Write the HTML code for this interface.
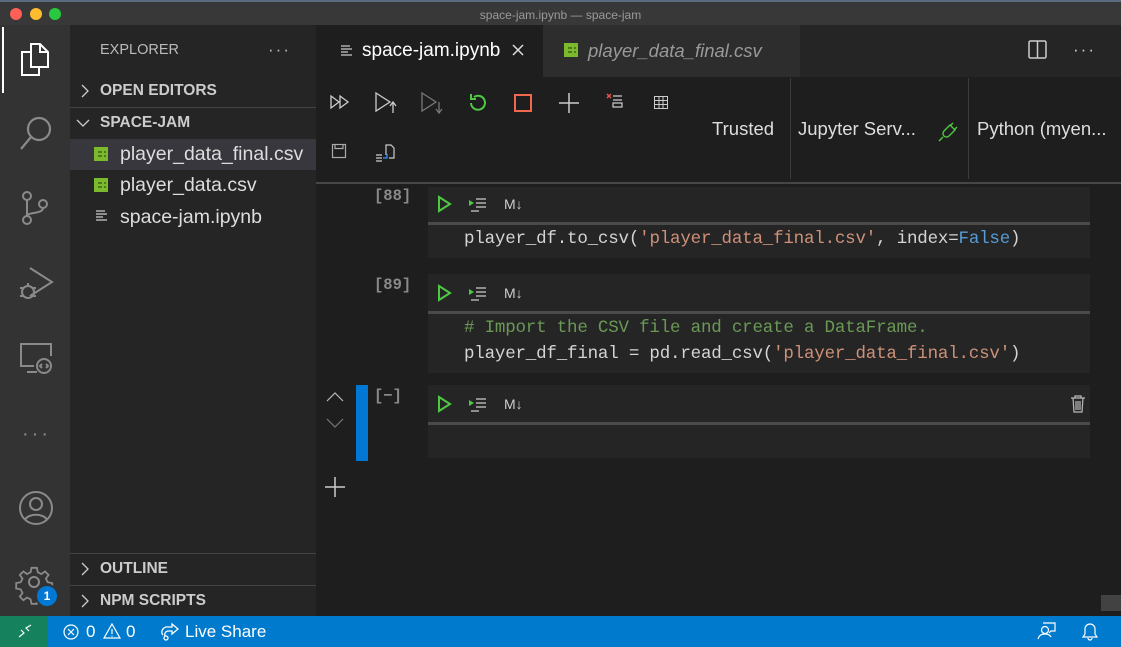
<!DOCTYPE html>
<html><head><meta charset="utf-8"><style>
*{margin:0;padding:0;box-sizing:border-box}
body{width:1121px;height:647px;overflow:hidden;background:#1e1e1e;font-family:"Liberation Sans",sans-serif;position:relative;color:#ccc}
.a{position:absolute}
.mono{font-family:"Liberation Mono",monospace}
svg{position:absolute;overflow:visible}
.csv{position:absolute;width:14px;height:14px;background:repeating-linear-gradient(90deg,#7cba2d 0 2px,transparent 2px 6px),repeating-linear-gradient(0deg,#7cba2d 0 2px,#4a7a1a 2px 4px);border:2px solid #7cba2d}
.code{font-size:17.5px;letter-spacing:-0.2px;white-space:pre}
</style></head><body>
<div class="a" style="left:0;top:0;width:1121px;height:25px;background:#383838;border-top:2px solid #5a6a80"></div>
<div class="a" style="left:10px;top:8px;width:12px;height:12px;border-radius:50%;background:#fe5f57"></div>
<div class="a" style="left:30px;top:8px;width:12px;height:12px;border-radius:50%;background:#febc2e"></div>
<div class="a" style="left:49px;top:8px;width:12px;height:12px;border-radius:50%;background:#28c840"></div>
<div class="a" style="left:0;top:8px;width:1121px;text-align:center;font-size:12px;color:#9a9a9a">space-jam.ipynb — space-jam</div>
<div class="a" style="left:0;top:25px;width:70px;height:591px;background:#333"></div>
<div class="a" style="left:2px;top:27px;width:2px;height:66px;background:#fff"></div>
<svg style="left:20px;top:42px" width="32" height="34" fill="none" stroke="#fff" stroke-width="2"><path d="M11 2h9l8 8v15H11z M20 2v8h8"/><path d="M11 10H2v23h17v-8"/></svg>
<svg style="left:20px;top:114px" width="34" height="36" fill="none" stroke="#8a8a8a" stroke-width="2.2"><circle cx="19" cy="15" r="11"/><path d="M11 23L1 35"/></svg>
<svg style="left:20px;top:190px" width="30" height="36" fill="none" stroke="#8a8a8a" stroke-width="2"><circle cx="7" cy="6" r="4"/><circle cx="7" cy="30" r="4"/><circle cx="23" cy="14" r="4"/><path d="M7 10v16 M23 18c0 6-16 4-16 8"/></svg>
<svg style="left:18px;top:266px" width="36" height="36" fill="none" stroke="#8a8a8a" stroke-width="2"><path d="M12 2l22 14-22 14"/><circle cx="10" cy="26" r="6"/><path d="M2 22h4M2 30h4M14 22h4M14 30h4M10 20v-3"/></svg>
<svg style="left:20px;top:342px" width="34" height="34" fill="none" stroke="#8a8a8a" stroke-width="2"><path d="M14 24H1V2h30v12"/><path d="M7 30h10"/><circle cx="24" cy="24" r="7"/><path d="M22 22l-2 2 2 2M26 22l2 2-2 2"/></svg>
<div class="a" style="left:22px;top:423px;font-size:20px;color:#8a8a8a;letter-spacing:3px">···</div>
<svg style="left:19px;top:491px" width="34" height="34" fill="none" stroke="#8a8a8a" stroke-width="2"><circle cx="17" cy="17" r="16"/><circle cx="17" cy="13" r="6"/><path d="M6 29c3-7 19-7 22 0"/></svg>
<svg style="left:18px;top:566px" width="36" height="36" fill="none" stroke="#8a8a8a" stroke-width="2"><path d="M15 2h6l1 5 4 2 4-3 4 4-3 4 2 4 5 1v6l-5 1-2 4 3 4-4 4-4-3-4 2-1 5h-6l-1-5-4-2-4 3-4-4 3-4-2-4-5-1v-6l5-1 2-4-3-4 4-4 4 3 4-2z" transform="scale(.9)"/><circle cx="16" cy="16" r="5"/></svg>
<div class="a" style="left:35px;top:584px;width:24px;height:24px;border-radius:50%;background:#0078d4;border:2px solid #333;color:#fff;font-size:12px;font-weight:bold;text-align:center;line-height:20px">1</div>
<div class="a" style="left:70px;top:25px;width:246px;height:591px;background:#252526"></div>
<div class="a" style="left:100px;top:42px;font-size:14.5px;color:#bbb">EXPLORER</div>
<div class="a" style="left:268px;top:40px;font-size:17px;color:#bbb;letter-spacing:2px">···</div>
<svg style="left:80px;top:84px" width="10" height="14" fill="none" stroke="#ccc" stroke-width="1.3"><path d="M2 1l6 6-6 6"/></svg>
<div class="a" style="left:100px;top:82px;font-size:15.5px;font-weight:bold;color:#ccc">OPEN EDITORS</div>
<div class="a" style="left:70px;top:107px;width:246px;height:1px;background:#444"></div>
<svg style="left:76px;top:118px" width="14" height="10" fill="none" stroke="#ccc" stroke-width="1.3"><path d="M1 2l6 6 6-6"/></svg>
<div class="a" style="left:100px;top:114px;font-size:15.5px;font-weight:bold;color:#ccc">SPACE-JAM</div>
<div class="a" style="left:70px;top:139px;width:246px;height:31px;background:#37373d"></div>
<div class="csv" style="left:94px;top:147px"></div>
<div class="a" style="left:120px;top:143px;font-size:19.5px;color:#ddd">player_data_final.csv</div>
<div class="csv" style="left:94px;top:178px"></div>
<div class="a" style="left:120px;top:174px;font-size:19.5px;color:#ddd">player_data.csv</div>
<svg style="left:96px;top:210px" width="12" height="12" stroke="#ccc" stroke-width="1.3"><path d="M0 1h9M0 4h11M0 7h7M0 10h11"/></svg>
<div class="a" style="left:120px;top:206px;font-size:19.5px;color:#ddd">space-jam.ipynb</div>
<div class="a" style="left:70px;top:553px;width:246px;height:1px;background:#444"></div>
<svg style="left:80px;top:562px" width="10" height="14" fill="none" stroke="#ccc" stroke-width="1.3"><path d="M2 1l6 6-6 6"/></svg>
<div class="a" style="left:100px;top:560px;font-size:15.5px;font-weight:bold;color:#ccc">OUTLINE</div>
<div class="a" style="left:70px;top:585px;width:246px;height:1px;background:#444"></div>
<svg style="left:80px;top:594px" width="10" height="14" fill="none" stroke="#ccc" stroke-width="1.3"><path d="M2 1l6 6-6 6"/></svg>
<div class="a" style="left:100px;top:592px;font-size:15.5px;font-weight:bold;color:#ccc">NPM SCRIPTS</div>
<div class="a" style="left:316px;top:25px;width:805px;height:52px;background:#252526"></div>
<div class="a" style="left:316px;top:25px;width:227px;height:52px;background:#1e1e1e"></div>
<svg style="left:341px;top:45px" width="12" height="12" stroke="#ccc" stroke-width="1.3"><path d="M0 1h9M0 4h11M0 7h7M0 10h11"/></svg>
<div class="a" style="left:362px;top:40px;font-size:19px;color:#fff">space-jam.ipynb</div>
<svg style="left:512px;top:44px" width="12" height="12" stroke="#ddd" stroke-width="1.5"><path d="M1 1l10 10M11 1L1 11"/></svg>
<div class="a" style="left:543px;top:25px;width:257px;height:52px;background:#2d2d2d"></div>
<div class="csv" style="left:564px;top:43px"></div>
<div class="a" style="left:588px;top:40px;font-size:18.5px;color:#999;font-style:italic">player_data_final.csv</div>
<svg style="left:1028px;top:40px" width="20" height="20" fill="none" stroke="#ccc" stroke-width="1.5"><rect x="1" y="1" width="17" height="17" rx="1.5"/><path d="M9.5 1v17"/></svg>
<div class="a" style="left:1073px;top:40px;font-size:17px;color:#ccc;letter-spacing:2px">···</div>
<svg style="left:330px;top:95px" width="20" height="14" fill="none" stroke="#ccc" stroke-width="1.3"><path d="M1 1l8 6-8 6zM10 1l8 6-8 6z"/></svg>
<svg style="left:375px;top:92px" width="24" height="22" fill="none" stroke="#ccc" stroke-width="1.3"><path d="M1 1l14 9-14 9z M18 10v11 M15 14l3-4 3 4"/></svg>
<svg style="left:421px;top:92px" width="24" height="22" fill="none" stroke="#777" stroke-width="1.3"><path d="M1 1l14 9-14 9z M18 10v11 M15 17l3 4 3-4"/></svg>
<svg style="left:468px;top:93px" width="20" height="20" fill="none" stroke="#4ec942" stroke-width="2"><path d="M3 10a7 7 0 1 0 3-6 M3 1v5h5"/></svg>
<div class="a" style="left:514px;top:94px;width:18px;height:18px;border:2px solid #f0694f"></div>
<svg style="left:559px;top:93px" width="20" height="20" stroke="#ccc" stroke-width="1.5"><path d="M10 0v20M0 10h20"/></svg>
<svg style="left:606px;top:93px" width="18" height="18" fill="none" stroke="#ccc" stroke-width="1.2"><path d="M1 1l4 4M5 1l-4 4" stroke="#f14c4c" stroke-width="1.5"/><path d="M7 3h9M7 7h9M7 10h9v4H7z"/></svg>
<svg style="left:654px;top:96px" width="14" height="14" fill="none" stroke="#ccc" stroke-width="1"><rect x=".5" y=".5" width="13" height="12"/><path d="M.5 4.5h13M.5 8.5h13M5 .5v12M9 .5v12"/></svg>
<svg style="left:332px;top:144px" width="14" height="14" fill="none" stroke="#aaa" stroke-width="1.2"><rect x=".5" y=".5" width="13" height="13"/><path d="M3 .5v4h8v-4"/></svg>
<svg style="left:376px;top:144px" width="20" height="18" fill="none" stroke="#ccc" stroke-width="1.2"><path d="M0 11h6M0 14h6M0 17h6"/><path d="M10 11V1h5l3 3v10h-5"/><path d="M7 14h4v-4" stroke="#3794ff"/></svg>
<div class="a" style="left:712px;top:118px;font-size:18.5px;color:#ddd">Trusted</div>
<div class="a" style="left:790px;top:78px;width:1px;height:101px;background:#3c3c3c"></div>
<div class="a" style="left:798px;top:118px;font-size:18.5px;color:#ddd">Jupyter Serv...</div>
<svg style="left:938px;top:122px" width="20" height="20" fill="none" stroke="#4ec942" stroke-width="1.4"><path d="M1 19l4-4M15 1l-3 3M19 5l-3 3"/><path d="M12 3l5 5-6 6a3.5 3.5 0 0 1-5-5z"/></svg>
<div class="a" style="left:968px;top:78px;width:1px;height:101px;background:#3c3c3c"></div>
<div class="a" style="left:977px;top:118px;font-size:18.5px;color:#ddd">Python (myen...</div>
<div class="a" style="left:316px;top:182px;width:805px;height:2px;background:#474747"></div>
<div class="a mono" style="left:374px;top:187px;font-size:15.5px;font-weight:bold;color:#8a8a8a">[88]</div>
<div class="a" style="left:428px;top:187px;width:662px;height:71px;background:#252526"></div>
<div class="a" style="left:428px;top:222px;width:662px;height:3px;background:#4a4a4a"></div>
<div class="a mono code" style="left:464px;top:229px;color:#d4d4d4">player_df.to_csv(<span style="color:#ce9178">'player_data_final.csv'</span>, index=<span style="color:#569cd6">False</span>)</div>
<div class="a mono" style="left:374px;top:276px;font-size:15.5px;font-weight:bold;color:#8a8a8a">[89]</div>
<div class="a" style="left:428px;top:274px;width:662px;height:99px;background:#252526"></div>
<div class="a" style="left:428px;top:311px;width:662px;height:3px;background:#4a4a4a"></div>
<div class="a mono code" style="left:464px;top:318px;color:#6a9955"># Import the CSV file and create a DataFrame.</div>
<div class="a mono code" style="left:464px;top:344px;color:#d4d4d4">player_df_final = pd.read_csv(<span style="color:#ce9178">'player_data_final.csv'</span>)</div>
<svg style="left:326px;top:392px" width="18" height="10" fill="none" stroke="#bbb" stroke-width="1.2"><path d="M1 9l8-8 8 8"/></svg>
<svg style="left:326px;top:418px" width="18" height="10" fill="none" stroke="#777" stroke-width="1.2"><path d="M1 1l8 8 8-8"/></svg>
<div class="a" style="left:356px;top:385px;width:12px;height:76px;background:#0078d4"></div>
<div class="a mono" style="left:374px;top:387px;font-size:15.5px;font-weight:bold;color:#8a8a8a">[−]</div>
<div class="a" style="left:428px;top:385px;width:662px;height:73px;background:#252526"></div>
<div class="a" style="left:428px;top:422px;width:662px;height:3px;background:#4a4a4a"></div>
<svg style="left:1070px;top:395px" width="16" height="18" fill="none" stroke="#bbb" stroke-width="1.2"><path d="M1 3h14M5 3V1h6v2M3 3l1 14h8l1-14M6 6v9M8 6v9M10 6v9"/></svg>
<svg style="left:324px;top:477px" width="22" height="20" stroke="#ccc" stroke-width="1.5"><path d="M11 0v20M1 10h20"/></svg>
<svg style="left:438px;top:196px" width="80" height="18"><path d="M1 1l11 7-11 7z" fill="none" stroke="#4ec942" stroke-width="2"/><path d="M31 4l5 3-5 3z" fill="#4ec942"/><path d="M38 3h10M38 7h10M38 11h10M33 15h8" stroke="#ccc" stroke-width="1.3"/><text x="66" y="13" font-family="Liberation Sans" font-size="14" fill="#ccc">M↓</text></svg>
<svg style="left:438px;top:285px" width="80" height="18"><path d="M1 1l11 7-11 7z" fill="none" stroke="#4ec942" stroke-width="2"/><path d="M31 4l5 3-5 3z" fill="#4ec942"/><path d="M38 3h10M38 7h10M38 11h10M33 15h8" stroke="#ccc" stroke-width="1.3"/><text x="66" y="13" font-family="Liberation Sans" font-size="14" fill="#ccc">M↓</text></svg>
<svg style="left:438px;top:396px" width="80" height="18"><path d="M1 1l11 7-11 7z" fill="none" stroke="#4ec942" stroke-width="2"/><path d="M31 4l5 3-5 3z" fill="#4ec942"/><path d="M38 3h10M38 7h10M38 11h10M33 15h8" stroke="#ccc" stroke-width="1.3"/><text x="66" y="13" font-family="Liberation Sans" font-size="14" fill="#ccc">M↓</text></svg>
<div class="a" style="left:1101px;top:595px;width:20px;height:16px;background:#424242"></div>
<div class="a" style="left:0;top:616px;width:1121px;height:31px;background:#007acc"></div>
<div class="a" style="left:0;top:616px;width:48px;height:31px;background:#16825d"></div>
<svg style="left:18px;top:624px" width="14" height="14" fill="none" stroke="#fff" stroke-width="1.2"><path d="M1 13l5-4-3-3M13 1L8 4l3 3"/></svg>
<svg style="left:63px;top:624px" width="16" height="16" fill="none" stroke="#fff" stroke-width="1.2"><circle cx="8" cy="8" r="7"/><path d="M5 5l6 6M11 5l-6 6"/></svg>
<div class="a" style="left:86px;top:622px;font-size:17px;color:#fff">0</div>
<svg style="left:103px;top:623px" width="18" height="16" fill="none" stroke="#fff" stroke-width="1.2"><path d="M9 1l8 14H1z M9 6v5M9 12.5v1"/></svg>
<div class="a" style="left:126px;top:622px;font-size:17px;color:#fff">0</div>
<svg style="left:160px;top:623px" width="20" height="18" fill="none" stroke="#fff" stroke-width="1.3"><path d="M3 12c-3-3 0-9 6-8h3V1l6 5-6 5V8H9c-3 0-5 2-4 5"/><circle cx="6" cy="15" r="2"/></svg>
<div class="a" style="left:185px;top:622px;font-size:17px;color:#fff">Live Share</div>
<svg style="left:1037px;top:622px" width="20" height="18" fill="none" stroke="#fff" stroke-width="1.2"><circle cx="8" cy="8" r="3.5"/><path d="M1 17c1-4 4-5 7-5s5 1 6 3"/><path d="M6 1h12v8h-4l-2 2"/></svg>
<svg style="left:1081px;top:622px" width="18" height="19" fill="none" stroke="#fff" stroke-width="1.2"><path d="M2 15h14l-2-3V7a5 5 0 0 0-10 0v5z M7 16a2 2 0 0 0 4 0"/></svg>
</body></html>
